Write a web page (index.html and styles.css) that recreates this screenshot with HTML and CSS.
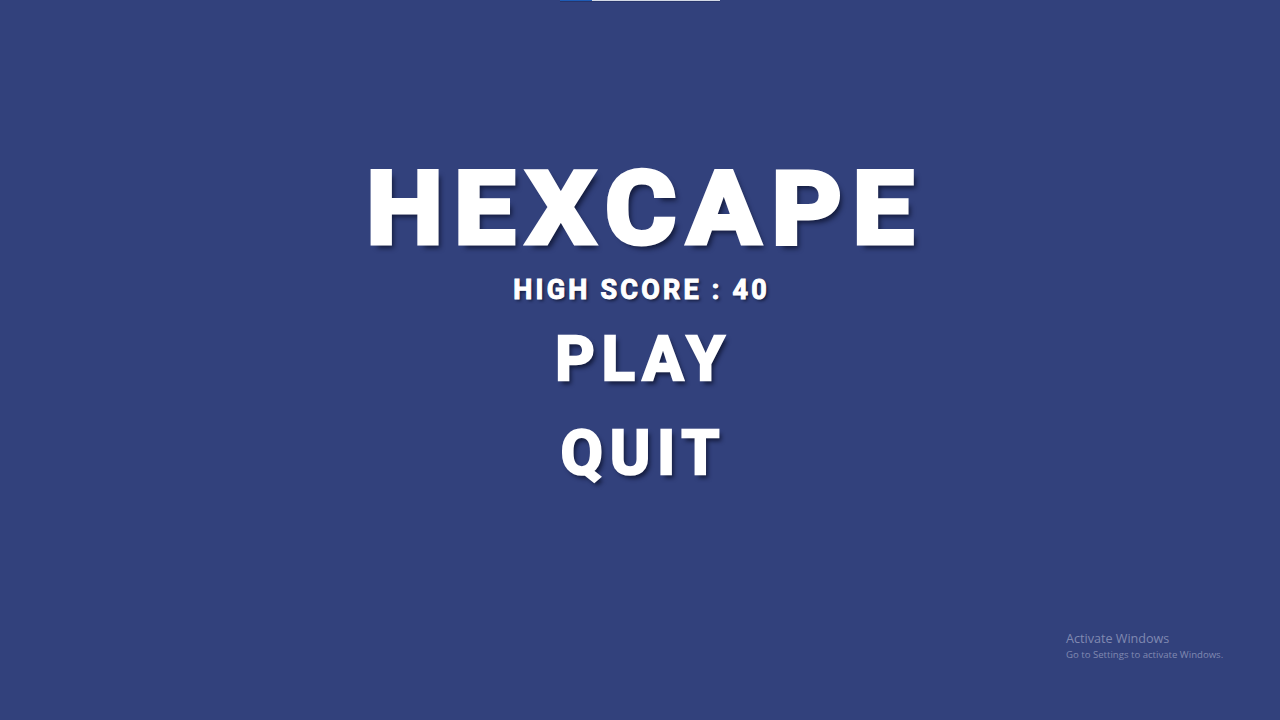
FILE: index.html
```html
<!DOCTYPE html>
<html>
<head>
<meta charset="utf-8">
<link rel="stylesheet" href="styles.css">
</head>
<body>
<div class="topbar"><div class="topbar-fill"></div></div>
<main class="menu">
  <h1 class="title">HEXCAPE</h1>
  <div class="score">HIGH SCORE : 40</div>
  <div class="btn play">PLAY</div>
  <div class="btn quit">QUIT</div>
</main>
<div class="watermark">
  <div class="wm-title">Activate Windows</div>
  <div class="wm-sub">Go to Settings to activate Windows.</div>
</div>
</body>
</html>
```
FILE: styles.css
```css
html, body {
  margin: 0;
  padding: 0;
  width: 1280px;
  height: 720px;
  overflow: hidden;
}
body {
  background: #32417c;
  font-family: Roboto, "Liberation Sans", sans-serif;
  color: #ffffff;
  position: relative;
}
.topbar {
  position: absolute;
  left: 560px;
  top: 0;
  width: 160px;
  height: 1px;
  background: #d3d9e6;
  box-shadow: 0 1px 0 #28356a;
}
.topbar-fill {
  width: 32px;
  height: 100%;
  background: #1e5bb5;
}
.menu {
  display: flex;
  flex-direction: column;
  align-items: center;
  padding-top: 144px;
}
.title {
  margin: 0;
  font-size: 100px;
  font-weight: 700;
  letter-spacing: 10.7px;
  padding-left: 10.7px;
  line-height: 129px;
  -webkit-text-stroke: 5px #ffffff;
  transform: scaleX(1.08);
  text-shadow: 4px 5px 5px rgba(10, 15, 40, 0.75);
}
.score {
  margin-top: -1px;
  margin-bottom: 1px;
  font-size: 27px;
  font-weight: 700;
  letter-spacing: 3.2px;
  padding-left: 3.2px;
  line-height: 36px;
  -webkit-text-stroke: 1px #ffffff;
  text-shadow: 2px 2px 3px rgba(10, 15, 40, 0.7);
}
.btn {
  font-size: 61px;
  font-weight: 700;
  letter-spacing: 7.2px;
  padding-left: 7.2px;
  line-height: 94px;
  -webkit-text-stroke: 2.5px #ffffff;
  text-shadow: 3px 4px 4px rgba(10, 15, 40, 0.75);
}
.play {
  margin-top: 3px;
}
.watermark {
  position: absolute;
  left: 1066px;
  top: 631px;
  color: #8089b1;
  font-family: "Open Sans", "Noto Sans", sans-serif;
}
.wm-title {
  font-size: 12.6px;
  line-height: 16px;
}
.wm-sub {
  font-size: 9.6px;
  line-height: 15px;
}
```
